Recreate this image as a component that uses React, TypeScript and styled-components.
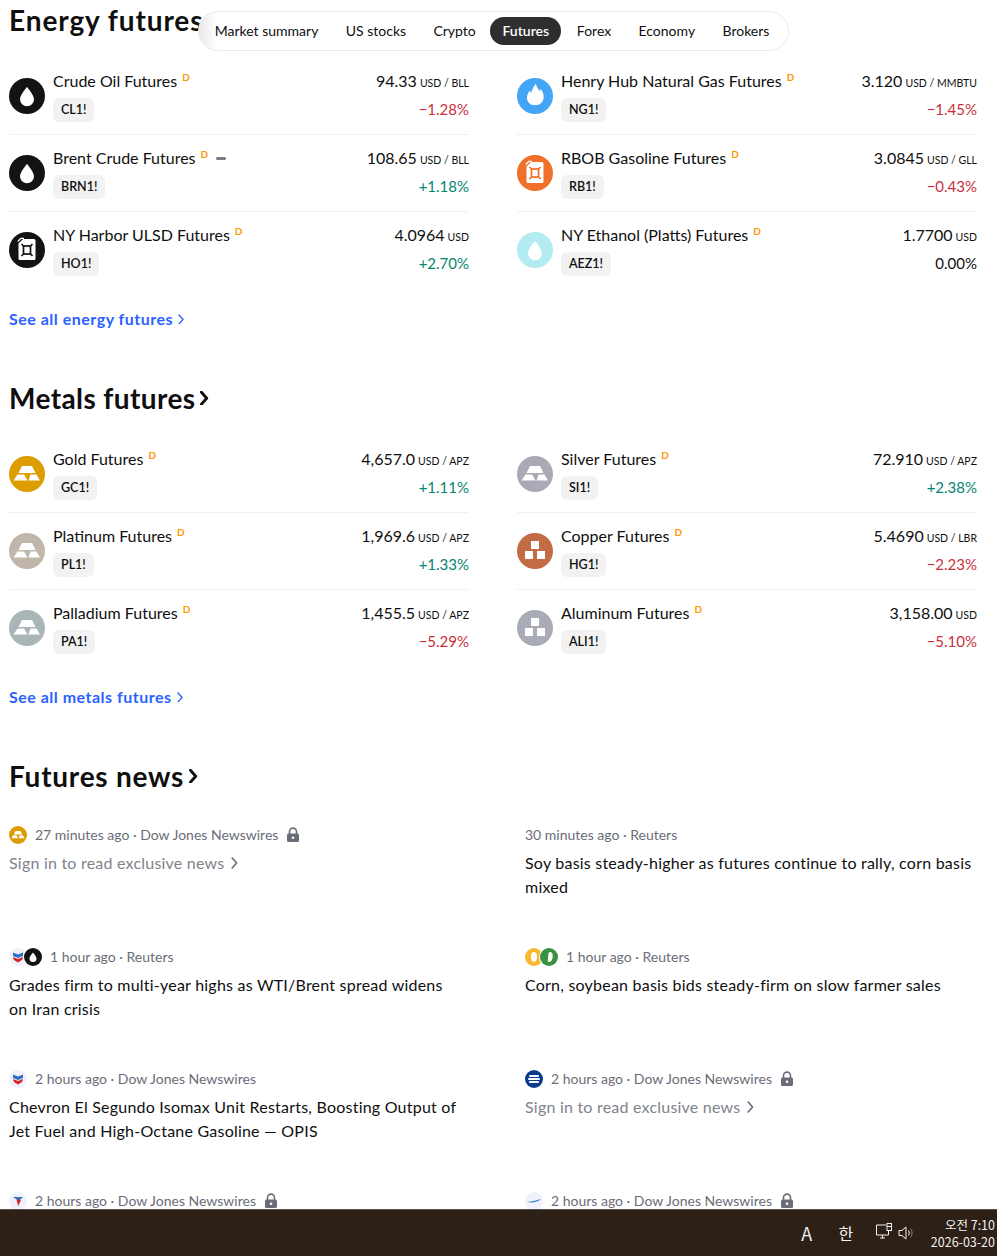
import React from 'react';
import styled, { createGlobalStyle } from 'styled-components';

const GlobalStyle = createGlobalStyle`
  html, body {
    height: 100%;
    margin: 0;
    background: #fff;
  }

  #root {
    height: 100%;
  }
`;

const Screen = styled.div`
  color: #0f0f0f;
  display: flex;
  flex-direction: column;
  font-family: 'Trebuchet MS', Lato, 'Noto Sans', sans-serif;
  height: 1256px;
  overflow: hidden;
  position: relative;
`;

const Page = styled.main`
  flex: 1;
  min-height: 0;
  overflow: hidden;
  padding: 0 20px 0 9px;
`;

const TabBar = styled.nav`
  align-items: center;
  background: linear-gradient(90deg, #e9e9e9 0, #fff 18px);
  border: 1px solid #ebebeb;
  border-radius: 20px;
  box-sizing: border-box;
  display: flex;
  height: 40px;
  left: 198px;
  padding: 0 2px;
  position: absolute;
  top: 11px;
  width: 591px;
`;

const Tab = styled.a<{ $active?: boolean }>`
  align-items: center;
  background: ${(p) => (p.$active ? '#2e2e2e' : 'transparent')};
  border-radius: 14px;
  box-sizing: border-box;
  color: ${(p) => (p.$active ? '#fff' : '#0f0f0f')};
  display: flex;
  font-size: 14px;
  font-weight: ${(p) => (p.$active ? 600 : 400)};
  height: 28px;
  margin: ${(p) => (p.$active ? '0 2px 0 1px' : '0')};
  padding: ${(p) => (p.$active ? '0 12px 2px' : '0 13.7px 2px')};
  white-space: nowrap;
`;

const Section = styled.section`
  padding-bottom: 47px;
`;

const Heading = styled.h2<{ $tracking: number }>`
  align-items: center;
  display: flex;
  font-size: 28px;
  font-weight: 700;
  gap: 5px;
  height: 40px;
  letter-spacing: ${(p) => p.$tracking}px;
  line-height: 38px;
  margin: 0 0 18px;
  white-space: nowrap;
`;

const MarketGrid = styled.div`
  column-gap: 48px;
  display: grid;
  grid-template-columns: 1fr 1fr;
`;

const Row = styled.div`
  align-items: center;
  display: flex;
  gap: 8px;
  padding: 11px 0 12px;

  &:not(:nth-child(n + 5)) {
    border-bottom: 1px solid #f0f0f0;
  }

  &:nth-child(n + 5) {
    padding-bottom: 13px;
  }
`;

const Circle = styled.span<{ $bg: string }>`
  align-items: center;
  background: ${(p) => p.$bg};
  border-radius: 50%;
  display: flex;
  flex-shrink: 0;
  height: 36px;
  justify-content: center;
  width: 36px;
`;

const NameColumn = styled.div`
  align-items: flex-start;
  display: flex;
  flex: 1;
  flex-direction: column;
  gap: 5px;
  min-width: 0;
`;

const NameLine = styled.div`
  align-items: flex-start;
  display: flex;
  font-size: 16px;
  height: 24px;
  line-height: 24px;
  white-space: nowrap;
`;

const Delay = styled.sup`
  color: #ff9800;
  font-size: 10px;
  font-weight: 700;
  line-height: 12px;
  margin-left: 5px;
  margin-top: 2px;
  vertical-align: baseline;
`;

const Dash = styled.span`
  align-self: center;
  background: #787b86;
  border-radius: 2px;
  height: 3px;
  margin-left: 8px;
  width: 10px;
`;

const Ticker = styled.span`
  background: #f2f2f2;
  border-radius: 6px;
  font-size: 12.5px;
  font-weight: 600;
  height: 24px;
  line-height: 24px;
  padding: 0 8px;
`;

const PriceColumn = styled.div`
  align-items: flex-end;
  display: flex;
  flex-direction: column;
  gap: 5px;
`;

const Price = styled.div`
  align-items: baseline;
  display: flex;
  font-size: 16px;
  gap: 3px;
  height: 24px;
  line-height: 24px;
  white-space: nowrap;
`;

const Unit = styled.span`
  font-size: 10.5px;
`;

const Change = styled.div<{ $tone: 'up' | 'down' | 'flat' }>`
  color: ${(p) => (p.$tone === 'up' ? '#068571' : p.$tone === 'down' ? '#cc2f3c' : '#0f0f0f')};
  font-size: 15px;
  height: 24px;
  line-height: 23px;
`;

const SeeAll = styled.a`
  align-items: center;
  color: #2962ff;
  display: flex;
  font-size: 16px;
  font-weight: 700;
  gap: 5px;
  height: 24px;
  letter-spacing: 0.5px;
  line-height: 24px;
  margin-top: 18px;
`;

const NewsGrid = styled.div`
  column-gap: 64px;
  display: grid;
  grid-template-columns: 1fr 1fr;
  margin-top: 27px;
`;

const Article = styled.article`
  height: 122px;
`;

const Meta = styled.div`
  align-items: center;
  color: #6a6d78;
  display: flex;
  font-size: 14px;
  gap: 8px;
  height: 24px;
  line-height: 24px;
  white-space: nowrap;
`;

const LogoStack = styled.span`
  display: flex;
  flex-shrink: 0;
`;

const Logo = styled.span<{ $bg: string; $stacked?: boolean }>`
  align-items: center;
  background: ${(p) => p.$bg};
  border-radius: 50%;
  box-shadow: ${(p) => (p.$stacked ? '0 0 0 1px #fff' : 'none')};
  display: flex;
  height: 18px;
  justify-content: center;
  margin-left: ${(p) => (p.$stacked ? '-3px' : '0')};
  overflow: hidden;
  position: relative;
  width: 18px;
`;

const Headline = styled.div`
  font-size: 16px;
  letter-spacing: 0.22px;
  line-height: 24px;
  margin-top: 4px;
`;

const SignIn = styled.div`
  align-items: center;
  color: #80838c;
  display: flex;
  font-size: 16px;
  gap: 7px;
  letter-spacing: 0.22px;
  line-height: 24px;
  margin-top: 4px;
`;

const Taskbar = styled.footer`
  align-items: center;
  background: #2d2016;
  border-top: 1px solid #57504a;
  box-sizing: border-box;
  color: #f2f2f2;
  display: flex;
  flex-shrink: 0;
  font-family: 'Noto Sans CJK KR', 'Noto Sans', sans-serif;
  height: 47px;
  justify-content: flex-end;
  padding-right: 2px;
`;

const TrayItem = styled.span<{ $width: number; $size: number }>`
  font-size: ${(p) => p.$size}px;
  text-align: center;
  width: ${(p) => p.$width}px;
`;

const Clock = styled.div`
  font-size: 12.5px;
  line-height: 17px;
  margin-left: 15px;
  text-align: right;
`;

const Chevron = ({ size = 10, weight = 1.6, color = 'currentColor' }: { size?: number; weight?: number; color?: string }) => (
  <svg width={size * 0.7} height={size * 1.2} viewBox="0 0 7 12" fill="none">
    <path d="M1.2 1l4.4 5-4.4 5" stroke={color} strokeWidth={weight} strokeLinecap="round" strokeLinejoin="round" />
  </svg>
);

const Lock = () => (
  <svg width="14" height="16" viewBox="0 0 14 16">
    <path d="M3.5 7V4.6a3.5 3.5 0 0 1 7 0V7" fill="none" stroke="#6a6d78" strokeWidth="1.6" />
    <rect x="1" y="6.5" width="12" height="8.5" rx="1.5" fill="#6a6d78" />
    <circle cx="7" cy="10.7" r="1.3" fill="#fff" />
  </svg>
);

type Glyph = 'drop' | 'flame' | 'can' | 'bars' | 'cubes';

const MarketGlyph = ({ glyph, bg, size = 36 }: { glyph: Glyph; bg: string; size?: number }) => (
  <svg width={size} height={size} viewBox="0 0 36 36" fill="#fff">
    {glyph === 'drop' && <path d="M18 9c0 0 7 8 7 12.2a7 7 0 0 1-14 0C11 17 18 9 18 9z" />}
    {glyph === 'flame' && (
      <path d="M19 5.7c.5 3.5 2 5 4 7.5 0-1 .5-2 .5-2.500 2 2 3.200 5 3.200 8 0 5-3.700 8.500-8.700 8.500S10 24.200 10 19.500c0-3 1.300-5 3-7 .2 1.200.7 2 1.300 2.500.5-3.500 2-6.500 4.700-9.300z" />
    )}
    {glyph === 'can' && (
      <>
        <path d="M14 7h11a1.500 1.500 0 0 1 1.500 1.500v18A1.500 1.500 0 0 1 25 28H11a1.500 1.500 0 0 1-1.500-1.500V11.500z" />
        <path d="M8.800 9.500l3-3.200h3.200" stroke="#fff" strokeWidth="1.300" fill="none" />
        <rect x="14.500" y="14" width="7" height="8" fill="none" stroke={bg} strokeWidth="1.700" />
        <path d="M12.500 12l2 2M23.500 12l-2 2M12.500 24l2-2M23.500 24l-2-2" stroke={bg} strokeWidth="1.700" />
      </>
    )}
    {glyph === 'bars' && (
      <>
        <path d="M13 10h10l3.500 7h-17z" />
        <path d="M8.500 18.500h6.500l3.500 6H4.500z" />
        <path d="M21.500 18.500h6l3.500 6H19.500z" />
      </>
    )}
    {glyph === 'cubes' && (
      <>
        <rect x="14" y="8" width="8" height="8" />
        <rect x="8" y="18" width="8" height="8" />
        <rect x="20" y="18" width="8" height="8" />
      </>
    )}
  </svg>
);

const ChevronShield = () => (
  <svg width="12" height="12" viewBox="0 0 12 12">
    <path d="M1 1.500l5 2 5-2V5L6 7 1 5z" fill="#2f6fc4" />
    <path d="M1 6l5 2 5-2c0 2.500-2 4-5 5.500C3 10 1 8.500 1 6z" fill="#d8232a" />
  </svg>
);

interface Market {
  name: string;
  ticker: string;
  price: string;
  unit: string;
  change: string;
  glyph: Glyph;
  color: string;
  dash?: boolean;
}

const energy: Market[] = [
  { name: 'Crude Oil Futures', ticker: 'CL1!', price: '94.33', unit: 'USD / BLL', change: '−1.28%', glyph: 'drop', color: '#131313' },
  { name: 'Henry Hub Natural Gas Futures', ticker: 'NG1!', price: '3.120', unit: 'USD / MMBTU', change: '−1.45%', glyph: 'flame', color: '#42a5f5' },
  { name: 'Brent Crude Futures', ticker: 'BRN1!', price: '108.65', unit: 'USD / BLL', change: '+1.18%', glyph: 'drop', color: '#131313', dash: true },
  { name: 'RBOB Gasoline Futures', ticker: 'RB1!', price: '3.0845', unit: 'USD / GLL', change: '−0.43%', glyph: 'can', color: '#ef6f2b' },
  { name: 'NY Harbor ULSD Futures', ticker: 'HO1!', price: '4.0964', unit: 'USD', change: '+2.70%', glyph: 'can', color: '#131313' },
  { name: 'NY Ethanol (Platts) Futures', ticker: 'AEZ1!', price: '1.7700', unit: 'USD', change: '0.00%', glyph: 'drop', color: '#b2ebf2' },
];

const metals: Market[] = [
  { name: 'Gold Futures', ticker: 'GC1!', price: '4,657.0', unit: 'USD / APZ', change: '+1.11%', glyph: 'bars', color: '#dd9c00' },
  { name: 'Silver Futures', ticker: 'SI1!', price: '72.910', unit: 'USD / APZ', change: '+2.38%', glyph: 'bars', color: '#aaa9b5' },
  { name: 'Platinum Futures', ticker: 'PL1!', price: '1,969.6', unit: 'USD / APZ', change: '+1.33%', glyph: 'bars', color: '#c0b6aa' },
  { name: 'Copper Futures', ticker: 'HG1!', price: '5.4690', unit: 'USD / LBR', change: '−2.23%', glyph: 'cubes', color: '#c26b45' },
  { name: 'Palladium Futures', ticker: 'PA1!', price: '1,455.5', unit: 'USD / APZ', change: '−5.29%', glyph: 'bars', color: '#a9b5b6' },
  { name: 'Aluminum Futures', ticker: 'ALI1!', price: '3,158.00', unit: 'USD', change: '−5.10%', glyph: 'cubes', color: '#a9abb7' },
];

const toneOf = (change: string) => (change.startsWith('+') ? 'up' : change.startsWith('−') ? 'down' : 'flat');

const MarketRow = ({ market }: { market: Market }) => (
  <Row>
    <Circle $bg={market.color}>
      <MarketGlyph glyph={market.glyph} bg={market.color} />
    </Circle>
    <NameColumn>
      <NameLine>
        {market.name}
        <Delay>D</Delay>
        {market.dash && <Dash />}
      </NameLine>
      <Ticker>{market.ticker}</Ticker>
    </NameColumn>
    <PriceColumn>
      <Price>
        {market.price}
        <Unit>{market.unit}</Unit>
      </Price>
      <Change $tone={toneOf(market.change)}>{market.change}</Change>
    </PriceColumn>
  </Row>
);

const Markets = ({ title, link, items, tracking, arrow }: { title: string; link: string; items: Market[]; tracking: number; arrow?: boolean }) => (
  <Section>
    <Heading $tracking={tracking}>
      {title}
      {arrow && <Chevron size={12} weight={2.4} />}
    </Heading>
    <MarketGrid>
      {items.map((m) => (
        <MarketRow key={m.ticker} market={m} />
      ))}
    </MarketGrid>
    <SeeAll>
      {link}
      <Chevron size={9} weight={1.6} />
    </SeeAll>
  </Section>
);

const SmallLogo = ({ kind }: { kind: string }) => {
  if (kind === 'gold') {
    return (
      <Logo $bg="#dd9c00">
        <MarketGlyph glyph="bars" bg="#dd9c00" size={18} />
      </Logo>
    );
  }
  if (kind === 'oil') {
    return (
      <Logo $bg="#131313" $stacked>
        <MarketGlyph glyph="drop" bg="#131313" size={18} />
      </Logo>
    );
  }
  if (kind === 'chevron') {
    return (
      <Logo $bg="#eff2fa">
        <ChevronShield />
      </Logo>
    );
  }
  if (kind === 'corn') {
    return (
      <Logo $bg="#f5b82e">
        <svg width="18" height="18" viewBox="0 0 18 18" fill="#fff">
          <path d="M9 4c2.500 0 3.500 3 3 6-.4 2.500-1.500 4-3 4s-2.600-1.500-3-4c-.5-3 .5-6 3-6z" />
        </svg>
      </Logo>
    );
  }
  if (kind === 'soy') {
    return (
      <Logo $bg="#3a9142" $stacked>
        <svg width="18" height="18" viewBox="0 0 18 18" fill="#fff">
          <path d="M10 4c2.500 0 3 3 2.600 5.500C12.200 12 11 14 9 14c-1.500 0-1.500-1.500-1-3s0-2 .2-3.500C8.400 5.500 9 4 10 4z" />
        </svg>
      </Logo>
    );
  }
  if (kind === 'stripes') {
    return (
      <Logo $bg="#0b3d8c">
        <svg width="18" height="18" viewBox="0 0 18 18" fill="#fff">
          <rect x="4" y="5" width="10" height="2" rx="1" />
          <rect x="3" y="8" width="12" height="2" rx="1" />
          <rect x="4" y="11" width="10" height="2" rx="1" />
        </svg>
      </Logo>
    );
  }
  if (kind === 'arrow') {
    return (
      <Logo $bg="#eff2fa">
        <svg width="12" height="12" viewBox="0 0 12 12">
          <path d="M1 2h10L7 6z" fill="#2f6fc4" />
          <path d="M4.500 4L9 5.500 6 11z" fill="#d8232a" />
        </svg>
      </Logo>
    );
  }
  return (
    <Logo $bg="#eff2fa">
      <svg width="14" height="6" viewBox="0 0 14 6">
        <path d="M0 4c4-.5 9-1.500 14-3-3 3-8 4-14 3z" fill="#3b82c4" />
      </svg>
    </Logo>
  );
};

interface News {
  logos: string[];
  time: string;
  source: string;
  title?: string;
}

const news: News[] = [
  { logos: ['gold'], time: '27 minutes ago', source: 'Dow Jones Newswires' },
  { logos: [], time: '30 minutes ago', source: 'Reuters', title: 'Soy basis steady-higher as futures continue to rally, corn basis mixed' },
  { logos: ['chevron', 'oil'], time: '1 hour ago', source: 'Reuters', title: 'Grades firm to multi-year highs as WTI/Brent spread widens on Iran crisis' },
  { logos: ['corn', 'soy'], time: '1 hour ago', source: 'Reuters', title: 'Corn, soybean basis bids steady-firm on slow farmer sales' },
  { logos: ['chevron'], time: '2 hours ago', source: 'Dow Jones Newswires', title: 'Chevron El Segundo Isomax Unit Restarts, Boosting Output of Jet Fuel and High-Octane Gasoline — OPIS' },
  { logos: ['stripes'], time: '2 hours ago', source: 'Dow Jones Newswires' },
  { logos: ['arrow'], time: '2 hours ago', source: 'Dow Jones Newswires' },
  { logos: ['plane'], time: '2 hours ago', source: 'Dow Jones Newswires' },
];

const NewsItem = ({ item }: { item: News }) => (
  <Article>
    <Meta>
      {item.logos.length > 0 && (
        <LogoStack>
          {item.logos.map((l) => (
            <SmallLogo key={l} kind={l} />
          ))}
        </LogoStack>
      )}
      <span>
        {item.time} · {item.source}
      </span>
      {item.source !== 'Reuters' && !item.title && <Lock />}
    </Meta>
    {item.title ? (
      <Headline>{item.title}</Headline>
    ) : (
      <SignIn>
        Sign in to read exclusive news
        <Chevron size={10} weight={1.6} color="#6a6d78" />
      </SignIn>
    )}
  </Article>
);

const tabs = ['Market summary', 'US stocks', 'Crypto', 'Futures', 'Forex', 'Economy', 'Brokers'];

export default function App() {
  return (
    <Screen>
      <GlobalStyle />
      <Page>
        <Markets title="Energy futures" link="See all energy futures" items={energy} tracking={0.9} />
        <Markets title="Metals futures" link="See all metals futures" items={metals} tracking={0.4} arrow />
        <Heading $tracking={0.75}>
          Futures news
          <Chevron size={12} weight={2.4} />
        </Heading>
        <NewsGrid>
          {news.map((n, i) => (
            <NewsItem key={i} item={n} />
          ))}
        </NewsGrid>
      </Page>
      <TabBar>
        {tabs.map((t) => (
          <Tab key={t} $active={t === 'Futures'}>
            {t}
          </Tab>
        ))}
      </TabBar>
      <Taskbar>
        <TrayItem $width={30} $size={18}>A</TrayItem>
        <TrayItem $width={48} $size={16}>한</TrayItem>
        <TrayItem $width={28} $size={14}>
          <svg width="18" height="18" viewBox="0 0 18 18" fill="none" stroke="#f2f2f2" strokeWidth="1">
            <path d="M11 3H1.500v10h12V9" />
            <path d="M5 16h5M7.500 13v3" />
            <rect x="12" y="1.500" width="4.500" height="7" />
            <path d="M12 4.500h4.500" />
          </svg>
        </TrayItem>
        <svg width="18" height="16" viewBox="0 0 18 16" fill="none" stroke="#f2f2f2" strokeWidth="1">
          <path d="M1 5.500h3L8 2v12L4 10.500H1z" />
          <path d="M10.500 5.500c1 1.500 1 3.500 0 5" />
          <path d="M12.500 3.500c2 2.500 2 6.500 0 9" stroke="#8d8681" />
        </svg>
        <Clock>
          오전 7:10
          <br />
          2026-03-20
        </Clock>
      </Taskbar>
    </Screen>
  );
}
